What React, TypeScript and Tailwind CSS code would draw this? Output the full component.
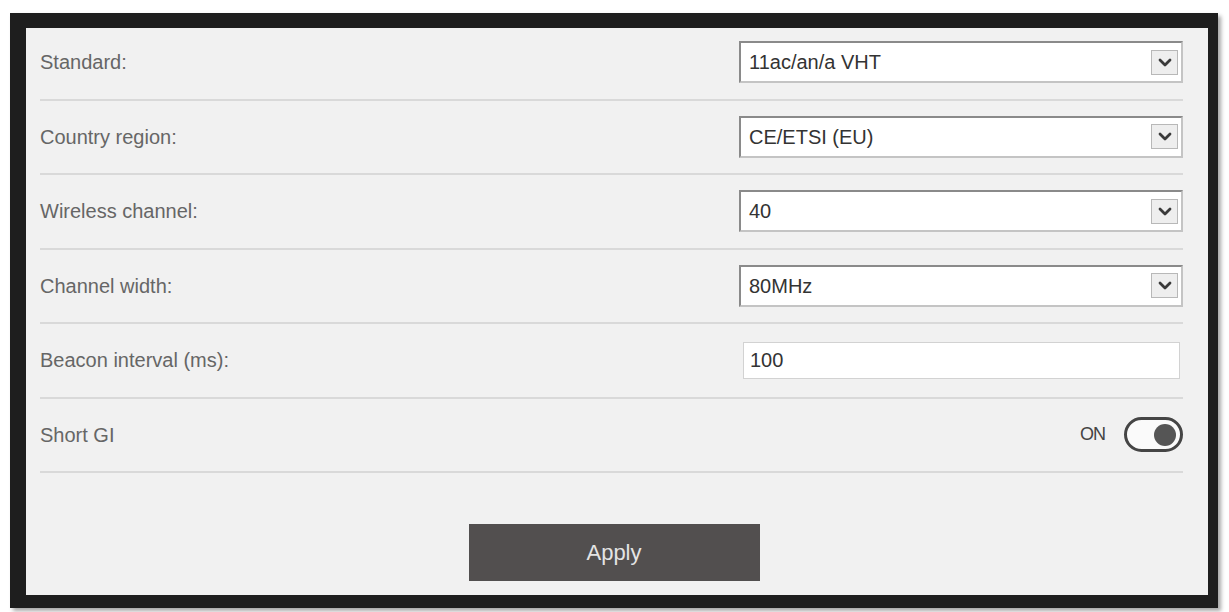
import React from "react";

type Field =
  | { kind: "select"; label: string; value: string }
  | { kind: "input"; label: string; value: string }
  | { kind: "toggle"; label: string; on: boolean };

const fields: Field[] = [
  { kind: "select", label: "Standard:", value: "11ac/an/a VHT" },
  { kind: "select", label: "Country region:", value: "CE/ETSI (EU)" },
  { kind: "select", label: "Wireless channel:", value: "40" },
  { kind: "select", label: "Channel width:", value: "80MHz" },
  { kind: "input", label: "Beacon interval (ms):", value: "100" },
  { kind: "toggle", label: "Short GI", on: true },
];

function Chevron() {
  return (
    <div className="flex h-[25px] w-[27px] items-center justify-center border border-[#b8b8b8] bg-[#eeeeee]">
      <svg width="14" height="9" viewBox="0 0 14 9" fill="none">
        <path d="M2 2 L7 7 L12 2" stroke="#3a3a3a" strokeWidth="2.8" strokeLinecap="round" strokeLinejoin="round" />
      </svg>
    </div>
  );
}

function SelectBox({ value }: { value: string }) {
  return (
    <div className="flex h-[42px] w-[444px] items-center justify-between border-2 border-[#8a8a8a] border-b-[#c4c4c4] border-r-[#c4c4c4] bg-white pl-[8px] pr-[3px]">
      <span className="text-[20px] text-[#333]">{value}</span>
      <Chevron />
    </div>
  );
}

function TextBox({ value }: { value: string }) {
  return (
    <div className="mr-[3px] flex h-[37px] w-[437px] items-center border border-[#d2d2d2] bg-white pl-[6px]">
      <span className="text-[20px] text-[#333]">{value}</span>
    </div>
  );
}

function Toggle({ on }: { on: boolean }) {
  return (
    <div className="flex items-center gap-[19px]">
      <span className="text-[18px] tracking-[-1px] text-[#444]">{on ? "ON" : "OFF"}</span>
      <div className="flex h-[35px] w-[59px] items-center justify-end rounded-full border-[3px] border-[#454545] bg-[#fafafa] pr-[4px]">
        <div className="h-[22px] w-[22px] rounded-full bg-[#555]" />
      </div>
    </div>
  );
}

export default function App() {
  return (
    <div
      className="h-[612px] w-[1229px] bg-white pl-[10px] pt-[13px]"
      style={{ fontFamily: '"Liberation Sans", Arial, sans-serif' }}
    >
      <div className="flex h-[595px] w-[1208px] flex-col border-b-[13px] border-l-[16px] border-r-[10px] border-t-[15px] border-[#1e1e1e] bg-[#f1f1f1] shadow-[3px_3px_4px_rgba(0,0,0,0.35)]">
        <div className="-mt-[2px] flex flex-col pl-[14px] pr-[25px]">
          {fields.map((f) => (
            <div
              key={f.label}
              className="flex h-[74.5px] items-center justify-between border-b-2 border-[#d9d9d9]"
            >
              <span className="text-[20px] text-[#666]">{f.label}</span>
              {f.kind === "select" && <SelectBox value={f.value} />}
              {f.kind === "input" && <TextBox value={f.value} />}
              {f.kind === "toggle" && <Toggle on={f.on} />}
            </div>
          ))}
        </div>
        <div className="flex justify-center pr-[6px] pt-[51px]">
          <button className="flex h-[57px] w-[291px] items-center justify-center bg-[#524f4f] text-[22px] text-[#e4e4e4]">
            Apply
          </button>
        </div>
      </div>
    </div>
  );
}
